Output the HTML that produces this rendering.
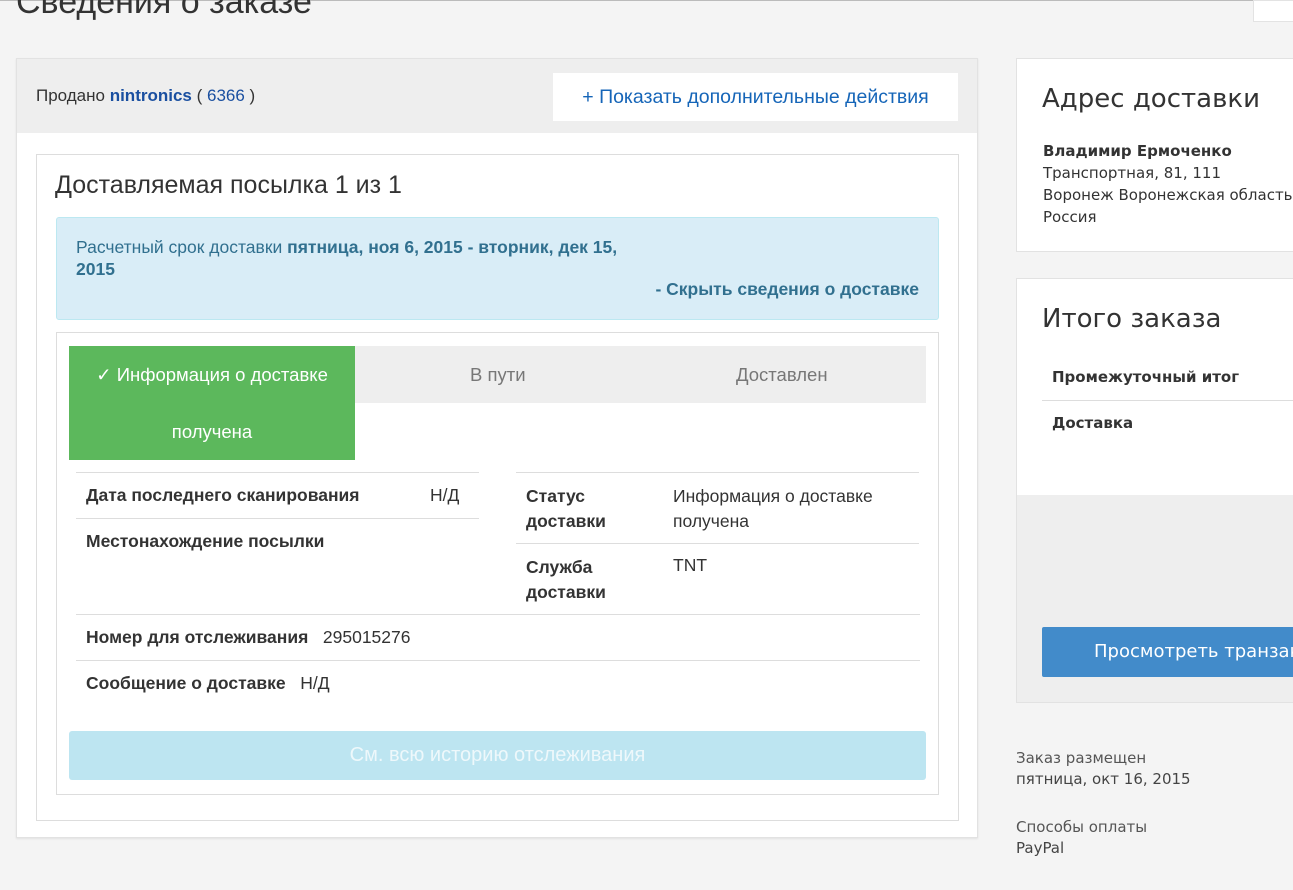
<!DOCTYPE html>
<html><head><meta charset="utf-8"><style>
*{margin:0;padding:0;box-sizing:border-box}
body{width:1293px;height:890px;overflow:hidden;background:#f4f4f4;font-family:"Liberation Sans",sans-serif;color:#333;position:relative;font-size:17.5px}
.a{position:absolute;white-space:nowrap}
.b{font-weight:bold}
.r{font-family:"DejaVu Sans","Liberation Sans",sans-serif}
.hl{position:absolute;height:1px;background:#ddd}
</style></head><body>
<div class="a" style="left:0;top:0;width:1293px;height:1px;background:#bbb"></div>
<div class="a" style="left:16px;top:-17px;font-size:34px;color:#333">Сведения о заказе</div>
<div class="a" style="left:1253px;top:0;width:45px;height:22px;background:#fff;border:1px solid #e3e3e3"></div>

<div class="a" style="left:16px;top:58px;width:962px;height:780px;background:#fff;border:1px solid #e2e2e2;box-shadow:0 1px 2px rgba(0,0,0,.08)"></div>
<div class="a" style="left:17px;top:59px;width:960px;height:74px;background:#eee"></div>
<div class="a" style="left:36px;top:86px;font-size:17px">Продано <b style="color:#1a4fa0">nintronics</b> ( <span style="color:#1a4fa0">6366</span> )</div>
<div class="a" style="left:553px;top:73px;width:405px;height:48px;background:#fff;color:#1565b8;font-size:19.5px;text-align:center;line-height:48px">+ Показать дополнительные действия</div>

<div class="a" style="left:36px;top:154px;width:923px;height:667px;border:1px solid #ddd;background:#fff"></div>
<div class="a" style="left:55px;top:171px;font-size:25px">Доставляемая посылка 1 из 1</div>
<div class="a" style="left:56px;top:217px;width:883px;height:103px;background:#d9edf7;border:1px solid #bce8f1;border-radius:3px"></div>
<div class="a" style="left:76px;top:236px;font-size:17.5px;color:#31708f;line-height:22px">Расчетный срок доставки <b>пятница, ноя 6, 2015 - вторник, дек 15,</b><br><b>2015</b></div>
<div class="a b" style="right:374px;top:279px;font-size:17.5px;color:#31708f">- Скрыть сведения о доставке</div>

<div class="a" style="left:56px;top:332px;width:883px;height:463px;border:1px solid #ddd"></div>
<div class="a" style="left:69px;top:346px;width:857px;height:57px;background:#eee"></div>
<div class="a" style="left:69px;top:346px;width:286px;height:114px;background:#5cb85c;color:#fff;font-size:18.5px;text-align:center;line-height:57px">✓ Информация о доставке<br>получена</div>
<div class="a" style="left:470px;top:364px;color:#777;font-size:18.5px">В пути</div>
<div class="a" style="left:736px;top:364px;color:#777;font-size:18.5px">Доставлен</div>

<div class="hl" style="left:76px;top:472px;width:403px"></div>
<div class="hl" style="left:76px;top:518px;width:403px"></div>
<div class="hl" style="left:516px;top:472px;width:403px"></div>
<div class="hl" style="left:516px;top:543px;width:403px"></div>
<div class="hl" style="left:76px;top:614px;width:844px"></div>
<div class="hl" style="left:76px;top:660px;width:844px"></div>
<div class="a b" style="left:86px;top:485px">Дата последнего сканирования</div>
<div class="a" style="left:430px;top:485px">Н/Д</div>
<div class="a b" style="left:86px;top:531px">Местонахождение посылки</div>
<div class="a b" style="left:526px;top:484px;line-height:25px">Статус<br>доставки</div>
<div class="a" style="left:673px;top:484px;line-height:25px">Информация о доставке<br>получена</div>
<div class="a b" style="left:526px;top:555px;line-height:25px">Служба<br>доставки</div>
<div class="a" style="left:673px;top:555px">TNT</div>
<div class="a" style="left:86px;top:627px"><b>Номер для отслеживания</b>&nbsp;&nbsp; 295015276</div>
<div class="a" style="left:86px;top:673px"><b>Сообщение о доставке</b>&nbsp;&nbsp; Н/Д</div>
<div class="a" style="left:69px;top:731px;width:857px;height:49px;background:#bde5f1;border-radius:3px;color:#eef8fb;font-size:20px;text-align:center;line-height:49px">См. всю историю отслеживания</div>

<div class="a" style="left:1016px;top:58px;width:290px;height:194px;background:#fff;border:1px solid #e2e2e2"></div>
<div class="a r" style="left:1042px;top:84px;font-size:26px;color:#333">Адрес доставки</div>
<div class="a r" style="left:1043px;top:140px;font-size:15px;line-height:22px;color:#333"><b>Владимир Ермоченко</b><br>Транспортная, 81, 111<br>Воронеж Воронежская область<br>Россия</div>

<div class="a" style="left:1016px;top:278px;width:290px;height:425px;background:#eee;border:1px solid #e2e2e2"></div>
<div class="a" style="left:1017px;top:279px;width:290px;height:216px;background:#fff"></div>
<div class="a r" style="left:1042px;top:304px;font-size:26px;color:#333">Итого заказа</div>
<div class="a r b" style="left:1052px;top:368px;font-size:15px">Промежуточный итог</div>
<div class="hl" style="left:1042px;top:400px;width:260px"></div>
<div class="a r b" style="left:1052px;top:414px;font-size:15px">Доставка</div>
<div class="a r" style="left:1042px;top:627px;width:270px;height:50px;background:#428bca;border-radius:2px;color:#fff;font-size:18px;line-height:50px;padding-left:52px">Просмотреть транзакцию</div>

<div class="a r" style="left:1016px;top:748px;font-size:15px;line-height:21px;color:#444"><span style="color:#555">Заказ размещен</span><br>пятница, окт 16, 2015</div>
<div class="a r" style="left:1016px;top:817px;font-size:15px;line-height:21px;color:#444"><span style="color:#555">Способы оплаты</span><br>PayPal</div>
</body></html>
